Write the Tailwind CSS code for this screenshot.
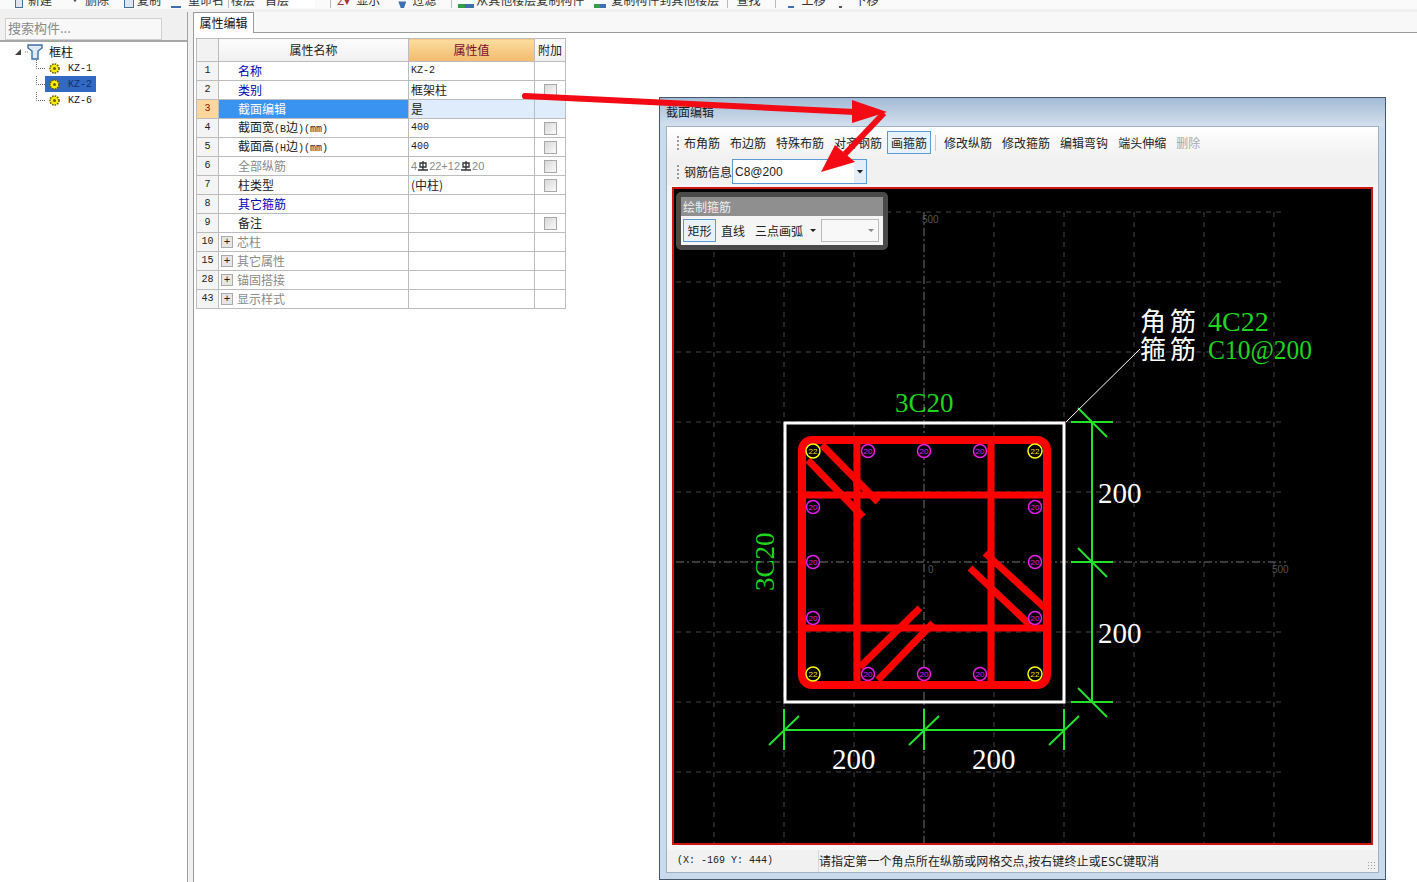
<!DOCTYPE html>
<html lang="zh-CN">
<head>
<meta charset="UTF-8" />
<title>截面编辑</title>
<script src="https://cdn.jsdelivr.net/npm/@tailwindcss/browser@4"></script>
</head>
<body class="bg-white">
<div class="relative w-[1417px] h-[882px] overflow-hidden bg-white text-[12px] leading-none text-[#222] font-['Noto_Sans_CJK_SC',sans-serif]">

  <!-- top toolbar, cut off by the top of the screenshot -->
  <div class="h-[12px] bg-[#f0f0f0] overflow-hidden">
    <div class="h-[9px] bg-[#fafafa] overflow-hidden">
      <div class="flex items-center h-[16px] -mt-[8px] pl-[15px] text-[#333] whitespace-nowrap">
        <span class="w-[8px] h-[16px] border border-[#47709c] bg-[#dbe7f3]"></span><span class="ml-[5px]">新建</span>
        <span class="ml-[18px] w-[10px] h-[16px] bg-[#555] [clip-path:polygon(20%_0,80%_0,60%_60%,40%_60%)]"></span><span class="ml-[5px]">删除</span>
        <span class="ml-[15px] w-[10px] h-[16px] border border-[#47709c] bg-[#dbe7f3]"></span><span class="ml-[3px]">复制</span>
        <span class="ml-[10px] w-[10px] h-[16px] border-b-2 border-[#3f6fb0]"></span><span class="ml-[7px]">重命名</span>
        <span class="ml-[4px] w-px h-[16px] bg-[#bbb]"></span><span class="ml-[2px]">楼层</span><span class="ml-[10px]">首层</span>
        <span class="ml-[1px] w-[25px] h-[16px] bg-white"></span><span class="ml-[15px] w-px h-[16px] bg-[#bbb]"></span>
        <span class="ml-[6px] text-[#a33]">Σ▾</span><span class="ml-[6px]">显示</span>
        <span class="ml-[18px] w-[8px] h-[16px] bg-[#3f6fb0] [clip-path:polygon(0_60%,100%_60%,70%_100%,30%_100%)]"></span><span class="ml-[6px]">过滤</span>
        <span class="ml-[15px] w-px h-[16px] bg-[#bbb]"></span>
        <span class="ml-[6px] w-[7px] h-[16px] border-b-4 border-[#2f9e44]"></span><span class="w-[9px] h-[16px] border-b-4 border-[#3f6fb0]"></span><span class="ml-[2px]">从其他楼层复制构件</span>
        <span class="ml-[10px] w-[6px] h-[16px] border-b-4 border-[#2f9e44]"></span><span class="w-[6px] h-[16px] border-b-4 border-[#3f6fb0]"></span><span class="ml-[5px]">复制构件到其他楼层</span>
        <span class="ml-[8px] w-px h-[16px] bg-[#bbb]"></span><span class="ml-[8px]">查找</span>
        <span class="ml-[15px] w-px h-[16px] bg-[#bbb]"></span>
        <span class="ml-[12px] w-[6px] h-[16px] border-b-2 border-[#3f6fb0]"></span><span class="ml-[7px]">上移</span>
        <span class="ml-[14px] w-[3px] h-[16px] border-b-2 border-[#555]"></span><span class="ml-[12px]">下移</span>
      </div>
    </div>
  </div>

  <div class="flex h-[870px]">
    <!-- component tree -->
    <aside class="w-[188px] flex flex-col border-r border-[#a0a0a0] bg-white">
      <div class="h-[30px] bg-[#f0f0f0] pt-[6px] pl-[5px] border-b-2 border-[#a8a8a8]">
        <div class="w-[157px] h-[22px] bg-[#f8f8f8] border border-[#d0d0d0] pl-[2px] pb-[3px] flex items-center text-[#8a8a8a] text-[13px]">搜索构件...</div>
      </div>
      <div class="pt-[2px]">
        <div class="flex items-center h-[16px] pl-[15px]">
          <span class="w-[6px] h-[6px] bg-[#444] [clip-path:polygon(100%_0,100%_100%,0_100%)]"></span>
          <svg class="ml-[3px]" width="22" height="16" viewBox="0 0 22 16"><path d="M1 8h3" stroke="#888" stroke-dasharray="1 1" fill="none"/><path d="M4 1h14v3l-4 3v8h-6V7L4 4z" fill="#dfeaf6" stroke="#3d6da5" stroke-width="1.4"/></svg>
          <span class="ml-[3px] text-[#111]">框柱</span>
        </div>
        <div class="flex items-center h-[16px] pl-[36px]">
          <svg width="9" height="16" viewBox="0 0 9 16"><path d="M.5 0v8.5H9" stroke="#666" stroke-dasharray="1 1" fill="none"/></svg>
          <span class="w-[51px] h-[16px] flex items-center pl-[4px]">
            <svg width="11" height="11" viewBox="0 0 11 11"><circle cx="5.5" cy="5.5" r="4.5" fill="#f5f000" stroke="#6d5c00" stroke-width="1.6" stroke-dasharray="1.6 1"/><circle cx="5.5" cy="5.5" r="1.5" fill="#6d5c00"/></svg>
            <span class="ml-[8px] pt-px font-['Liberation_Mono',monospace] text-[10px] text-[#222]">KZ-1</span>
          </span>
        </div>
        <div class="flex items-center h-[16px] pl-[36px]">
          <svg width="9" height="16" viewBox="0 0 9 16"><path d="M.5 0v8.5H9" stroke="#666" stroke-dasharray="1 1" fill="none"/></svg>
          <span class="w-[51px] h-[16px] flex items-center pl-[4px] bg-[#3169c4]">
            <svg width="11" height="11" viewBox="0 0 11 11"><circle cx="5.5" cy="5.5" r="4.5" fill="#f5f000" stroke="#6d5c00" stroke-width="1.6" stroke-dasharray="1.6 1"/><circle cx="5.5" cy="5.5" r="1.5" fill="#6d5c00"/></svg>
            <span class="ml-[8px] pt-px font-['Liberation_Mono',monospace] text-[10px] text-[#14306a]">KZ-2</span>
          </span>
        </div>
        <div class="flex items-center h-[16px] pl-[36px]">
          <svg width="9" height="16" viewBox="0 0 9 16"><path d="M.5 0v8.5H9" stroke="#666" stroke-dasharray="1 1" fill="none"/></svg>
          <span class="w-[51px] h-[16px] flex items-center pl-[4px]">
            <svg width="11" height="11" viewBox="0 0 11 11"><circle cx="5.5" cy="5.5" r="4.5" fill="#f5f000" stroke="#6d5c00" stroke-width="1.6" stroke-dasharray="1.6 1"/><circle cx="5.5" cy="5.5" r="1.5" fill="#6d5c00"/></svg>
            <span class="ml-[8px] pt-px font-['Liberation_Mono',monospace] text-[10px] text-[#222]">KZ-6</span>
          </span>
        </div>
      </div>
    </aside>

    <div class="w-[5px] bg-[#f0f0f0]"></div>

    <!-- property editor -->
    <main class="flex-1 flex flex-col">
      <div class="h-[20px] flex bg-[#f8f8f8]">
        <div class="w-[61px] h-[21px] bg-white border border-b-0 border-[#9a9a9a] flex items-center justify-center text-[#111] z-10">属性编辑</div>
      </div>
      <div class="flex-1 border-t border-l border-[#9a9a9a] pt-[5px] pl-[2px]">
        <table class="table-fixed border-collapse w-[369px] [&_td]:border [&_td]:border-[#bcbcbc] [&_tr]:h-[19px]">
          <colgroup><col class="w-[22px]" /><col class="w-[190px]" /><col class="w-[126px]" /><col class="w-[31px]" /></colgroup>
          <tbody>
            <tr class="!h-[23px]">
              <td class="bg-[#f2f2f2]"></td>
              <td class="bg-linear-to-b from-[#fdfdfd] to-[#efefef] text-center text-[#222]">属性名称</td>
              <td class="bg-linear-to-b from-[#fbdda0] to-[#f2bb6c] text-center text-[#7b0a33]">属性值</td>
              <td class="bg-linear-to-b from-[#fdfdfd] to-[#efefef] text-center text-[#222]">附加</td>
            </tr>
            <tr>
              <td class="bg-[#f4f4f4] text-center font-['Liberation_Mono',monospace] text-[10px]">1</td>
              <td class="pl-[19px] text-[#0000b8]">名称</td>
              <td class="pl-[2px] font-['Liberation_Mono',monospace] text-[10px]">KZ-2</td>
              <td></td>
            </tr>
            <tr>
              <td class="bg-[#f4f4f4] text-center font-['Liberation_Mono',monospace] text-[10px]">2</td>
              <td class="pl-[19px] text-[#0000b8]">类别</td>
              <td class="pl-[2px]">框架柱</td>
              <td><span class="block mx-auto w-[13px] h-[13px] border border-[#a8a8a8] bg-linear-to-br from-[#d8d8d8] to-[#fafafa]"></span></td>
            </tr>
            <tr>
              <td class="bg-[#fcd79d] text-center font-['Liberation_Mono',monospace] text-[10px] text-[#8a1010]">3</td>
              <td class="pl-[19px] bg-[#3a93f0] text-white">截面编辑</td>
              <td class="pl-[2px] bg-[#deecfb]">是</td>
              <td class="bg-[#deecfb]"></td>
            </tr>
            <tr>
              <td class="bg-[#f4f4f4] text-center font-['Liberation_Mono',monospace] text-[10px]">4</td>
              <td class="pl-[19px]">截面宽<span class="font-['Liberation_Mono',monospace] text-[10px]">(B</span>边<span class="font-['Liberation_Mono',monospace] text-[10px]">)(mm)</span></td>
              <td class="pl-[2px] font-['Liberation_Mono',monospace] text-[10px]">400</td>
              <td><span class="block mx-auto w-[13px] h-[13px] border border-[#a8a8a8] bg-linear-to-br from-[#d8d8d8] to-[#fafafa]"></span></td>
            </tr>
            <tr>
              <td class="bg-[#f4f4f4] text-center font-['Liberation_Mono',monospace] text-[10px]">5</td>
              <td class="pl-[19px]">截面高<span class="font-['Liberation_Mono',monospace] text-[10px]">(H</span>边<span class="font-['Liberation_Mono',monospace] text-[10px]">)(mm)</span></td>
              <td class="pl-[2px] font-['Liberation_Mono',monospace] text-[10px]">400</td>
              <td><span class="block mx-auto w-[13px] h-[13px] border border-[#a8a8a8] bg-linear-to-br from-[#d8d8d8] to-[#fafafa]"></span></td>
            </tr>
            <tr>
              <td class="bg-[#f4f4f4] text-center font-['Liberation_Mono',monospace] text-[10px]">6</td>
              <td class="pl-[19px] text-[#8a8a8a]">全部纵筋</td>
              <td class="pl-[2px] text-[#8a8a8a] font-['Liberation_Sans',sans-serif] text-[11px]">
                <span class="flex items-center">4<svg class="mx-[1px]" width="10" height="10" viewBox="0 0 10 10"><path d="M2 2h6v4H2zM5 0v9M0 9h10" fill="none" stroke="#333" stroke-width="1.3"/></svg>22+12<svg class="mx-[1px]" width="10" height="10" viewBox="0 0 10 10"><path d="M2 2h6v4H2zM5 0v9M0 9h10" fill="none" stroke="#333" stroke-width="1.3"/></svg>20</span>
              </td>
              <td><span class="block mx-auto w-[13px] h-[13px] border border-[#a8a8a8] bg-linear-to-br from-[#d8d8d8] to-[#fafafa]"></span></td>
            </tr>
            <tr>
              <td class="bg-[#f4f4f4] text-center font-['Liberation_Mono',monospace] text-[10px]">7</td>
              <td class="pl-[19px]">柱类型</td>
              <td class="pl-[2px]">(中柱)</td>
              <td><span class="block mx-auto w-[13px] h-[13px] border border-[#a8a8a8] bg-linear-to-br from-[#d8d8d8] to-[#fafafa]"></span></td>
            </tr>
            <tr>
              <td class="bg-[#f4f4f4] text-center font-['Liberation_Mono',monospace] text-[10px]">8</td>
              <td class="pl-[19px] text-[#0000b8]">其它箍筋</td>
              <td></td>
              <td></td>
            </tr>
            <tr>
              <td class="bg-[#f4f4f4] text-center font-['Liberation_Mono',monospace] text-[10px]">9</td>
              <td class="pl-[19px]">备注</td>
              <td></td>
              <td><span class="block mx-auto w-[13px] h-[13px] border border-[#a8a8a8] bg-linear-to-br from-[#d8d8d8] to-[#fafafa]"></span></td>
            </tr>
            <tr>
              <td class="bg-[#f4f4f4] text-center font-['Liberation_Mono',monospace] text-[10px]">10</td>
              <td class="text-[#8a8a8a]"><span class="flex items-center pl-[2px]"><span class="w-[12px] h-[12px] border border-[#aaa] bg-[#e6e6e6] flex items-center justify-center text-[11px] text-[#222] font-['Liberation_Mono',monospace]">+</span><span class="ml-[4px]">芯柱</span></span></td>
              <td></td>
              <td></td>
            </tr>
            <tr>
              <td class="bg-[#f4f4f4] text-center font-['Liberation_Mono',monospace] text-[10px]">15</td>
              <td class="text-[#8a8a8a]"><span class="flex items-center pl-[2px]"><span class="w-[12px] h-[12px] border border-[#aaa] bg-[#e6e6e6] flex items-center justify-center text-[11px] text-[#222] font-['Liberation_Mono',monospace]">+</span><span class="ml-[4px]">其它属性</span></span></td>
              <td></td>
              <td></td>
            </tr>
            <tr>
              <td class="bg-[#f4f4f4] text-center font-['Liberation_Mono',monospace] text-[10px]">28</td>
              <td class="text-[#8a8a8a]"><span class="flex items-center pl-[2px]"><span class="w-[12px] h-[12px] border border-[#aaa] bg-[#e6e6e6] flex items-center justify-center text-[11px] text-[#222] font-['Liberation_Mono',monospace]">+</span><span class="ml-[4px]">锚固搭接</span></span></td>
              <td></td>
              <td></td>
            </tr>
            <tr>
              <td class="bg-[#f4f4f4] text-center font-['Liberation_Mono',monospace] text-[10px]">43</td>
              <td class="text-[#8a8a8a]"><span class="flex items-center pl-[2px]"><span class="w-[12px] h-[12px] border border-[#aaa] bg-[#e6e6e6] flex items-center justify-center text-[11px] text-[#222] font-['Liberation_Mono',monospace]">+</span><span class="ml-[4px]">显示样式</span></span></td>
              <td></td>
              <td></td>
            </tr>
          </tbody>
        </table>
      </div>
    </main>
  </div>

  <!-- section editor window -->
  <section class="absolute left-[659px] top-[97px] w-[727px] h-[783px] flex flex-col border border-[#46586a] bg-[#c8dbec] px-[6px] pb-[6px]">
    <div class="h-[28px] -mx-[6px] px-[6px] shrink-0 flex items-center text-[#1c1c1c] bg-linear-to-b from-[#a3bbd6] to-[#d3e0ec]">截面编辑</div>
    <div class="flex-1 flex flex-col bg-[#f6f6f6] border border-[#9fb2c4] min-h-0">
      <div class="h-[31px] shrink-0 flex items-center pl-[10px] text-[#222] bg-linear-to-b from-white to-[#f1f1f1]">
        <span class="w-[2px] h-[14px] border-l-2 border-dotted border-[#999]"></span>
        <span class="ml-[5px]">布角筋</span>
        <span class="ml-[10px]">布边筋</span>
        <span class="ml-[10px]">特殊布筋</span>
        <span class="ml-[10px]">对齐钢筋</span>
        <span class="ml-[5px] h-[23px] px-[3px] flex items-center border border-[#5b9bd5] bg-[#e8f2fb]">画箍筋</span>
        <span class="ml-[4px] w-px h-[16px] bg-[#ccc]"></span>
        <span class="ml-[8px]">修改纵筋</span>
        <span class="ml-[10px]">修改箍筋</span>
        <span class="ml-[10px]">编辑弯钩</span>
        <span class="ml-[10px]">端头伸缩</span>
        <span class="ml-[10px] text-[#a8a8a8]">删除</span>
      </div>
      <div class="h-[27px] mb-[2px] shrink-0 flex items-center pl-[10px] text-[#222] bg-[#f1f1f1]">
        <span class="w-[2px] h-[14px] border-l-2 border-dotted border-[#999]"></span>
        <span class="ml-[5px]">钢筋信息</span>
        <div class="w-[135px] h-[25px] flex border border-[#5b9bd5] bg-white">
          <span class="flex-1 flex items-center pl-[2px] font-['Liberation_Sans',sans-serif] text-[12px]">C8@200</span>
          <span class="w-[12px] bg-[#e4eef8] flex items-center justify-center"><span class="w-[7px] h-[4px] bg-[#222] [clip-path:polygon(0_0,100%_0,50%_100%)]"></span></span>
        </div>
      </div>

      <!-- drawing canvas -->
      <div class="relative mx-[5px] h-[658px] shrink-0 border-2 border-[#d01515] bg-black overflow-hidden">
        <svg class="block" width="698" height="654" viewBox="674 189 698 654">
          <!-- grid -->
          <path d="M676 212H1286M676 282H1286M676 352H1286M676 422H1286M676 492H1286M676 632H1286M676 702H1286M676 772H1286M714 212V843M784 212V843M854 212V843M994 212V843M1064 212V843M1134 212V843M1204 212V843M1274 212V843" stroke="#444" stroke-dasharray="5 5" fill="none"/>
          <path d="M676 562H1286M924 212V843" stroke="#777" stroke-dasharray="8 3 2 3" fill="none"/>
          <g class="font-['Liberation_Sans',sans-serif]" font-size="10" fill="#555">
            <text x="922" y="223">500</text>
            <text x="928" y="573">0</text>
            <text x="1272" y="573">500</text>
          </g>
          <!-- section outline -->
          <rect x="785" y="423" width="279" height="279" fill="none" stroke="#fff" stroke-width="3"/>
          <!-- stirrups -->
          <g stroke="#ff0000" stroke-width="7" fill="none">
            <rect x="802" y="440" width="245" height="245" rx="10" stroke-width="8"/>
            <path d="M857 440V685M991 440V685M802 495H1047M802 628H1047"/>
            <path d="M822 445L878 502M808 460L863 517M985 553L1045 608M970 568L1030 625M920 608L860 667M933 623L878 680"/>
          </g>
          <!-- rebars -->
          <g fill="#000" stroke="#ffff00" stroke-width="1.5">
            <circle cx="813" cy="451" r="7"/><circle cx="1035" cy="451" r="7"/><circle cx="813" cy="674" r="7"/><circle cx="1035" cy="674" r="7"/>
          </g>
          <g fill="#000" stroke="#e61ee6" stroke-width="1.5">
            <circle cx="868" cy="451" r="6.5"/><circle cx="924" cy="451" r="6.5"/><circle cx="980" cy="451" r="6.5"/>
            <circle cx="868" cy="674" r="6.5"/><circle cx="924" cy="674" r="6.5"/><circle cx="980" cy="674" r="6.5"/>
            <circle cx="813" cy="507" r="6.5"/><circle cx="813" cy="562" r="6.5"/><circle cx="813" cy="618" r="6.5"/>
            <circle cx="1035" cy="507" r="6.5"/><circle cx="1035" cy="562" r="6.5"/><circle cx="1035" cy="618" r="6.5"/>
          </g>
          <g class="font-['Liberation_Sans',sans-serif]" font-size="8" text-anchor="middle" fill="#e8e800">
            <text x="813" y="454">22</text><text x="1035" y="454">22</text><text x="813" y="677">22</text><text x="1035" y="677">22</text>
          </g>
          <g class="font-['Liberation_Sans',sans-serif]" font-size="8" text-anchor="middle" fill="#e61ee6">
            <text x="868" y="454">20</text><text x="924" y="454">20</text><text x="980" y="454">20</text>
            <text x="868" y="677">20</text><text x="924" y="677">20</text><text x="980" y="677">20</text>
            <text x="813" y="510">20</text><text x="813" y="565">20</text><text x="813" y="621">20</text>
            <text x="1035" y="510">20</text><text x="1035" y="565">20</text><text x="1035" y="621">20</text>
          </g>
          <!-- dimensions -->
          <g stroke="#22e32a" stroke-width="2" fill="none">
            <path d="M1092 422V702M1071 422H1113M1078 408L1107 437M1071 562H1113M1078 548L1107 577M1071 702H1113M1078 688L1107 717"/>
            <path d="M784 730H1064M784 709V750M769 745L799 716M924 709V750M909 745L939 716M1064 709V750M1049 745L1079 716"/>
          </g>
          <path d="M1066 422L1140 349" stroke="#fff" fill="none"/>
          <g class="font-['Liberation_Serif',serif]" font-size="29">
            <text x="832" y="769" fill="#fff">200</text>
            <text x="972" y="769" fill="#fff">200</text>
            <text x="1098" y="503" fill="#fff">200</text>
            <text x="1098" y="643" fill="#fff">200</text>
            <text x="895" y="412" fill="#1fd41f" font-size="27">3C20</text>
            <text x="774" y="591" fill="#1fd41f" font-size="27" transform="rotate(-90 774 591)">3C20</text>
            <text x="1208" y="331" fill="#1fd41f" font-size="28">4C22</text>
            <text x="1208" y="359" fill="#1fd41f" font-size="28" textLength="104" lengthAdjust="spacingAndGlyphs">C10@200</text>
          </g>
          <g class="font-['Noto_Sans_CJK_SC',sans-serif]" font-size="26" fill="#fff" letter-spacing="4">
            <text x="1140" y="331">角筋</text>
            <text x="1140" y="359">箍筋</text>
          </g>
        </svg>

        <!-- floating stirrup palette -->
        <div class="absolute left-[2px] top-[3px] w-[212px] h-[58px] rounded-[5px] border-[5px] border-[#4a4a4a] bg-[#f5f5f5] overflow-hidden">
          <div class="h-[19px] bg-[#8f8f8f] text-[#eee] flex items-center pl-[2px]">绘制箍筋</div>
          <div class="h-[29px] flex items-center pl-[2px] text-[#222]">
            <span class="w-[33px] h-[23px] flex items-center justify-center border border-[#5b9bd5] bg-[#e8f2fb]">矩形</span>
            <span class="ml-[5px]">直线</span>
            <span class="ml-[10px]">三点画弧</span>
            <span class="ml-[7px] w-[6px] h-[3px] bg-[#222] [clip-path:polygon(0_0,100%_0,50%_100%)]"></span>
            <span class="ml-[5px] w-[58px] h-[23px] border border-[#bbb] bg-[#f8f8f8] flex items-center justify-end pr-[4px]"><span class="w-[6px] h-[3px] bg-[#888] [clip-path:polygon(0_0,100%_0,50%_100%)]"></span></span>
          </div>
        </div>
      </div>

      <!-- status bar -->
      <div class="mt-[5px] flex-1 flex items-center bg-[#f1f1f1] relative">
        <span class="w-[152px] h-full flex items-center pl-[10px] border-r border-[#d8d8d8] font-['Liberation_Mono',monospace] text-[10px] text-[#222]">(X: -169 Y: 444)</span>
        <span class="text-[#222] tracking-[0.1px]">请指定第一个角点所在纵筋或网格交点,按右键终止或ESC键取消</span>
        <span class="absolute right-[2px] bottom-[2px] w-[9px] h-[9px] bg-[radial-gradient(#999_1px,transparent_1px)] bg-[length:3px_3px]"></span>
      </div>
    </div>
  </section>

  <!-- red annotation arrows over everything -->
  <svg class="absolute inset-0 pointer-events-none" width="1417" height="882" viewBox="0 0 1417 882">
    <path d="M525 96L855 112" stroke="#f40a14" stroke-width="6" stroke-linecap="round" fill="none"/>
    <path d="M852 100L887 112L852 123Z" fill="#f40a14"/>
    <path d="M884 113L845 154" stroke="#f40a14" stroke-width="6" fill="none"/>
    <path d="M821 172L835 145L855 162Z" fill="#f40a14"/>
  </svg>
</div>
</body>
</html>
